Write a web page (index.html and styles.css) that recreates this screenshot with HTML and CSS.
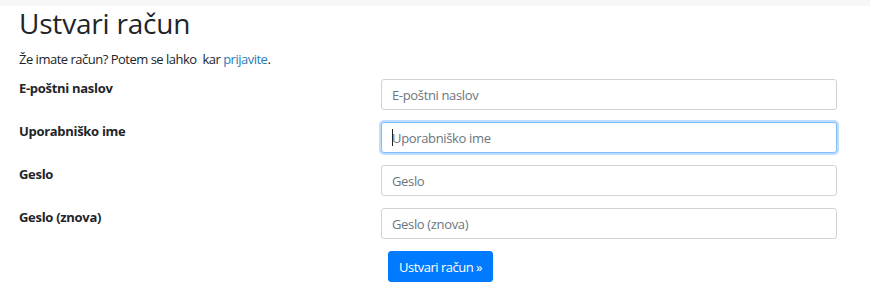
FILE: index.html
```html
<!DOCTYPE html>
<html lang="sl">
<head>
    <meta charset="UTF-8">
    <meta name="viewport" content="width=device-width, initial-scale=1.0">
    <title>Ustvari račun</title>
    <link rel="stylesheet" href="styles.css">
</head>
<body>
    <!-- Light strip left over from the navbar above -->
    <div class="top-strip"></div>

    <main class="page">
        <h1 class="page-title">Ustvari račun</h1>
        <p class="intro">Že imate račun? Potem se lahko &nbsp;kar <a href="#">prijavite</a>.</p>

        <form class="signup-form">
            <div class="form-row">
                <label for="email">E-poštni naslov</label>
                <input id="email" type="email" placeholder="E-poštni naslov">
            </div>
            <div class="form-row">
                <label for="username">Uporabniško ime</label>
                <!-- focused field, with the text caret drawn over it -->
                <div class="input-wrap has-caret">
                    <input id="username" class="is-focused" type="text" placeholder="Uporabniško ime">
                </div>
            </div>
            <div class="form-row">
                <label for="password">Geslo</label>
                <input id="password" type="password" placeholder="Geslo">
            </div>
            <div class="form-row">
                <label for="password2">Geslo (znova)</label>
                <input id="password2" type="password" placeholder="Geslo (znova)">
            </div>
            <div class="form-row">
                <span></span>
                <div class="actions">
                    <button type="submit" class="btn-primary">Ustvari račun &raquo;</button>
                </div>
            </div>
        </form>
    </main>
</body>
</html>
```

FILE: styles.css
```css
body {
    margin: 0; /* Remove default margin */
    font-family: 'Open Sans', 'Noto Sans', sans-serif;
    font-size: 13px;
    color: #212529;
    background: #ffffff;
}

.top-strip {
    height: 6px;
    background-color: #f7f7f8;
    margin-right: 1px;
}

.page {
    padding: 0 19px;
}

.page-title {
    font-size: 28px;
    font-weight: 400;
    line-height: 32px;
    letter-spacing: -0.2px;
    margin: 1px 0 10px 0;
}

.intro {
    margin: 0 0 10px 0;
    line-height: 20px;
    letter-spacing: -0.5px;
}

.intro a {
    color: #2a7bb8;
    text-decoration: none;
}

.signup-form {
    display: flex;
    flex-direction: column;
    gap: 12px;
}

.form-row {
    display: grid;
    grid-template-columns: 362px 456px;
    align-items: start;
}

.form-row label {
    font-weight: 700;
    line-height: 18px;
    letter-spacing: -0.3px;
}

.form-row input {
    box-sizing: border-box;
    display: block;
    height: 31px;
    width: 100%;
    padding: 0 10px;
    border: 1px solid #ced4da;
    border-radius: 3px;
    font-family: inherit;
    font-size: 13px;
    color: #495057;
    outline: none;
    letter-spacing: -0.35px;
}

.form-row input::placeholder {
    color: #6c757d;
}

.form-row input.is-focused {
    border-color: #80bdff;
    box-shadow: 0 0 0 2px rgba(0, 123, 255, 0.25);
}

.input-wrap {
    position: relative;
}

.has-caret::after {
    content: "";
    position: absolute;
    left: 11px;
    top: 7px;
    width: 1px;
    height: 17px;
    background-color: #222222;
}

.actions {
    padding-left: 7px;
}

.btn-primary {
    height: 31px;
    padding: 0 10px;
    border: 1px solid #007bff;
    border-radius: 3px;
    background-color: #007bff;
    color: #ffffff;
    font-family: inherit;
    font-size: 13px;
    letter-spacing: -0.5px;
}
```
